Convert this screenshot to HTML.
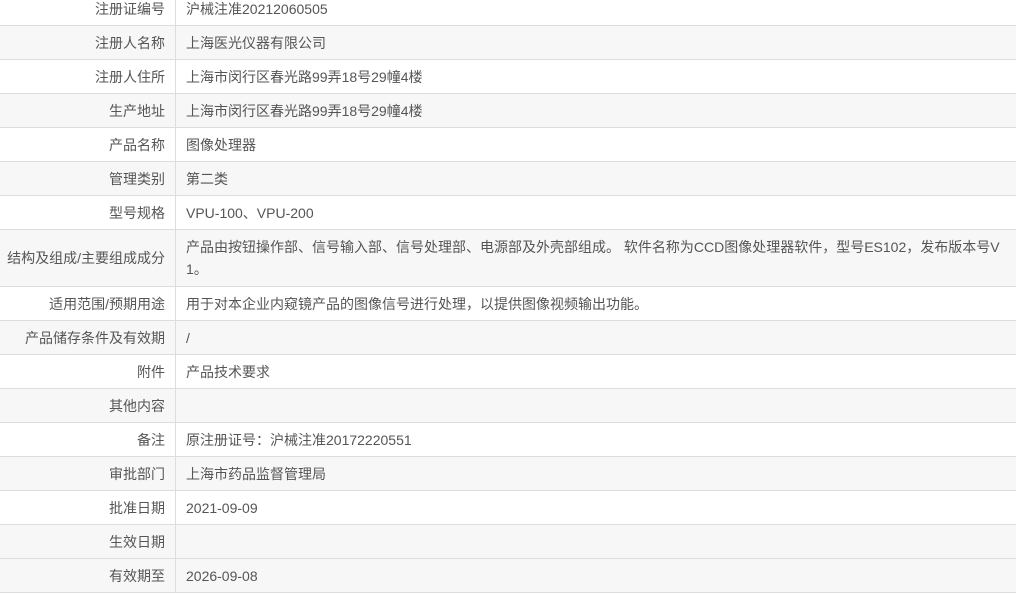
<!DOCTYPE html>
<html><head><meta charset="utf-8"><style>
body{margin:0;background:#fff;overflow:hidden;width:1016px;height:595px}
table{position:absolute;top:-9px;left:-1px;width:1019px;border-collapse:collapse;font-family:"Liberation Sans","Noto Sans CJK SC",sans-serif;font-size:14px;color:#555}
td{border:1px solid #ddd;height:33px;padding:0;line-height:22px}
td.l{width:165px;text-align:right;padding-right:10px}
td.v{padding-left:10px;padding-right:10px}
tr:nth-child(even) td{background:#f7f7f7}
tr.g td{background:#f7f7f7}
tr.tall td{height:56px}
</style></head><body>
<table>
<tr><td class="l">注册证编号</td><td class="v">沪械注准20212060505</td></tr>
<tr><td class="l">注册人名称</td><td class="v">上海医光仪器有限公司</td></tr>
<tr><td class="l">注册人住所</td><td class="v">上海市闵行区春光路99弄18号29幢4楼</td></tr>
<tr><td class="l">生产地址</td><td class="v">上海市闵行区春光路99弄18号29幢4楼</td></tr>
<tr><td class="l">产品名称</td><td class="v">图像处理器</td></tr>
<tr><td class="l">管理类别</td><td class="v">第二类</td></tr>
<tr><td class="l">型号规格</td><td class="v">VPU-100、VPU-200</td></tr>
<tr class="tall"><td class="l">结构及组成/主要组成成分</td><td class="v">产品由按钮操作部、信号输入部、信号处理部、电源部及外壳部组成。 软件名称为CCD图像处理器软件，型号ES102，发布版本号V<br>1。</td></tr>
<tr><td class="l">适用范围/预期用途</td><td class="v">用于对本企业内窥镜产品的图像信号进行处理，以提供图像视频输出功能。</td></tr>
<tr><td class="l">产品储存条件及有效期</td><td class="v">/</td></tr>
<tr><td class="l">附件</td><td class="v">产品技术要求</td></tr>
<tr><td class="l">其他内容</td><td class="v"></td></tr>
<tr><td class="l">备注</td><td class="v">原注册证号：沪械注准20172220551</td></tr>
<tr><td class="l">审批部门</td><td class="v">上海市药品监督管理局</td></tr>
<tr><td class="l">批准日期</td><td class="v">2021-09-09</td></tr>
<tr><td class="l">生效日期</td><td class="v"></td></tr>
<tr class="g"><td class="l">有效期至</td><td class="v">2026-09-08</td></tr>
</table>
</body></html>
